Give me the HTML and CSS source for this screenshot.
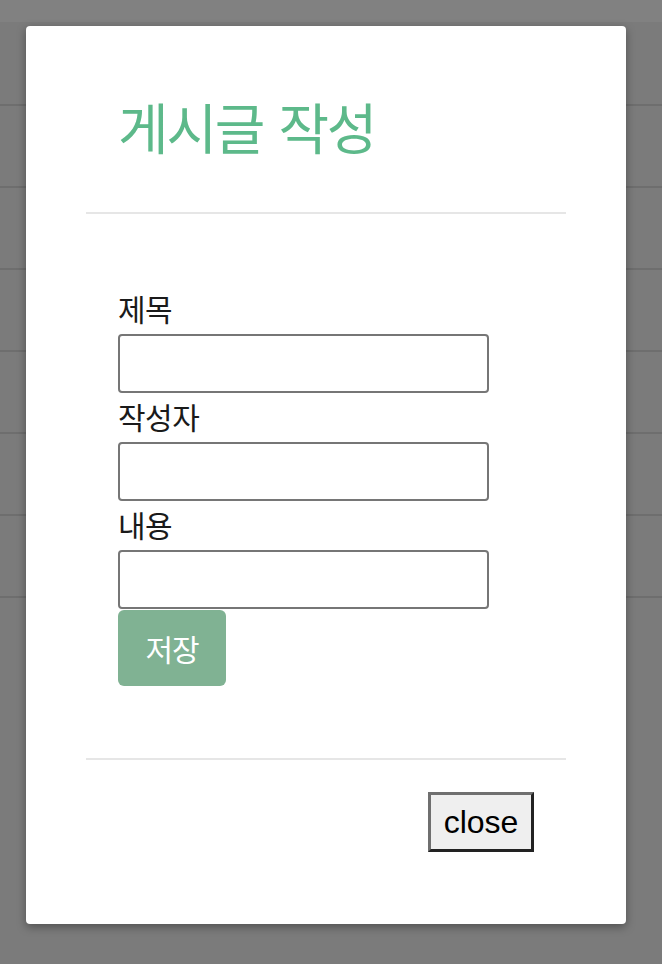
FILE: index.html
```html
<!DOCTYPE html>
<html lang="ko">
<head>
<meta charset="utf-8">
<title>게시글 작성</title>
<link rel="stylesheet" href="styles.css">
</head>
<body>
<div class="page">
  <div class="table-head"></div>
  <div class="row"></div>
  <div class="row"></div>
  <div class="row"></div>
  <div class="row"></div>
  <div class="row"></div>
  <div class="row"></div>
  <div class="row"></div>
</div>
<div class="modal">
  <header class="modal-header">
    <h1 class="modal-title">게시글 작성</h1>
  </header>
  <section class="modal-body">
    <form class="post-form">
      <label class="field-label" for="title">제목</label>
      <input class="field-input" id="title" type="text">
      <label class="field-label" for="writer">작성자</label>
      <input class="field-input" id="writer" type="text">
      <label class="field-label" for="content">내용</label>
      <input class="field-input" id="content" type="text">
      <button class="save-btn" type="button">저장</button>
    </form>
  </section>
  <footer class="modal-footer">
    <button class="close-btn" type="button">close</button>
  </footer>
</div>
</body>
</html>
```
FILE: styles.css
```css
html, body {
  margin: 0;
  padding: 0;
}
body {
  width: 662px;
  height: 964px;
  background: #7b7b7b;
  font-family: "Noto Sans CJK KR", "Noto Sans", sans-serif;
  overflow: hidden;
}
.page {
  display: flex;
  flex-direction: column;
}
.table-head {
  height: 22px;
  background: #818181;
}
.row {
  height: 80px;
  border-bottom: 2px solid #6e6e6e;
}
.table-head + .row {
  height: 82px;
}
.modal {
  position: absolute;
  top: 26px;
  left: 26px;
  width: 600px;
  height: 898px;
  background: #fff;
  border-radius: 4px;
  box-shadow: 0 3px 10px rgba(0, 0, 0, 0.35);
  display: flex;
  flex-direction: column;
}
.modal-header {
  margin: 0 60px;
  padding: 67px 32px 55px;
  border-bottom: 2px solid #e6e6e6;
}
.modal-title {
  margin: 0;
  font-size: 55px;
  line-height: 64px;
  font-weight: 400;
  letter-spacing: -2.2px;
  word-spacing: 2px;
  color: #5db98a;
}
.modal-body {
  margin: 0 60px;
  padding: 71px 32px 72px;
  border-bottom: 2px solid #e6e6e6;
}
.post-form {
  display: flex;
  flex-direction: column;
  align-items: flex-start;
}
.field-label {
  height: 49px;
  line-height: 47px;
  font-size: 30px;
  letter-spacing: -0.5px;
  color: #1a1a1a;
}
.field-input {
  box-sizing: border-box;
  width: 371px;
  height: 59px;
  margin: 0;
  border: 2px solid #767676;
  border-radius: 4px;
  background: #fff;
}
.save-btn {
  box-sizing: border-box;
  margin-top: 1px;
  width: 108px;
  height: 76px;
  border: none;
  border-radius: 6px;
  background: #80b293;
  color: #fff;
  font-family: "Noto Sans CJK KR", sans-serif;
  font-size: 30px;
  letter-spacing: -1px;
  padding: 0;
}
.modal-footer {
  margin: 0 60px;
  padding: 32px 32px 0;
  display: flex;
  justify-content: flex-end;
}
.close-btn {
  box-sizing: border-box;
  width: 106px;
  height: 60px;
  margin: 0;
  padding: 0;
  background: #efefef;
  border-style: solid;
  border-width: 3px;
  border-color: #6f6f6f #222 #222 #6f6f6f;
  font-family: "Liberation Sans", Arial, sans-serif;
  font-size: 32px;
  color: #000;
}
```
